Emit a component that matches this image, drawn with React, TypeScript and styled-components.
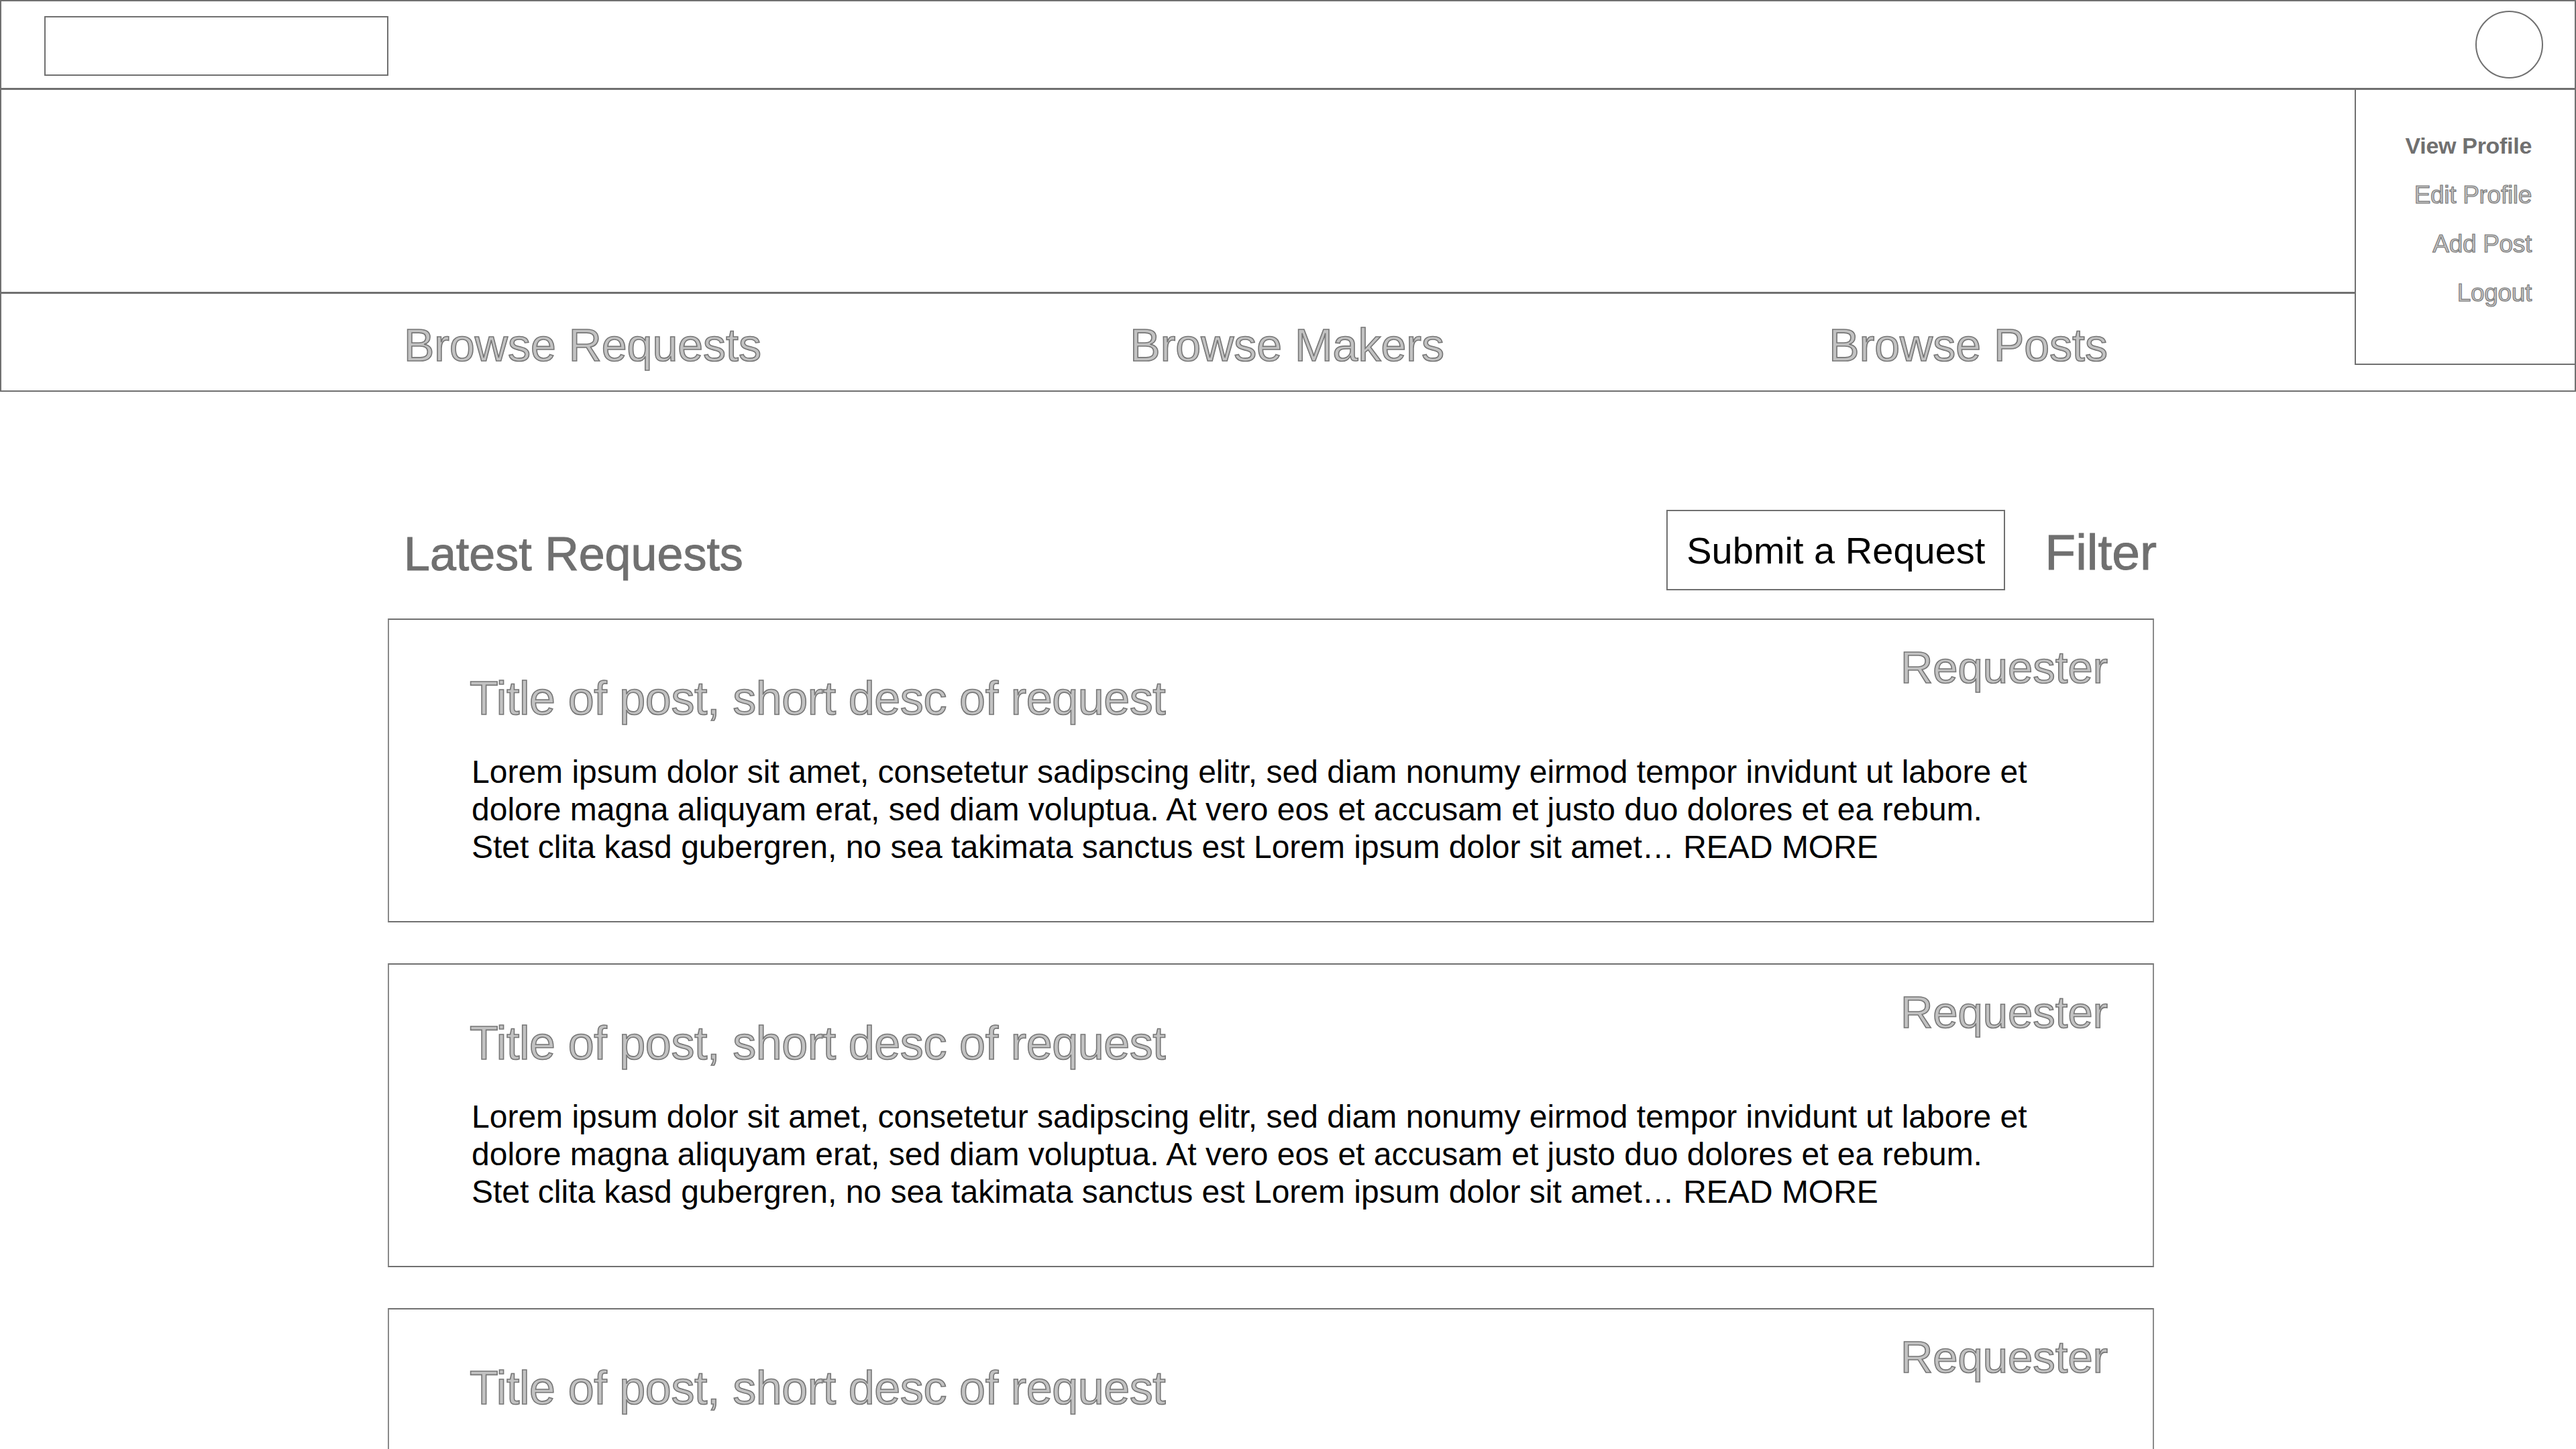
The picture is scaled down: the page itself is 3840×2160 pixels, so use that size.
import React from "react";
import styled, { createGlobalStyle, css } from "styled-components";

const GlobalStyle = createGlobalStyle`
  html, body {
    margin: 0;
    padding: 0;
    background: #ffffff;
  }
  body {
    font-family: "Liberation Sans", Arial, Helvetica, sans-serif;
    color: #000000;
  }
`;

const line = "#707070";

const outlined = css`
  color: #c2c2c2;
  -webkit-text-stroke: 1.6px #767676;
`;

const Page = styled.div`
  position: relative;
  width: 3840px;
  min-height: 2160px;
  overflow: hidden;
`;

const TopBar = styled.header`
  box-sizing: border-box;
  height: 134px;
  display: flex;
  align-items: center;
  justify-content: space-between;
  padding: 0 47px 0 64px;
  border: 2px solid ${line};
  border-bottom-width: 3px;
`;

const LogoBox = styled.div`
  box-sizing: border-box;
  width: 513px;
  height: 89px;
  margin-top: 3px;
  border: 2px solid ${line};
`;

const Avatar = styled.div`
  box-sizing: border-box;
  width: 101px;
  height: 101px;
  border-radius: 50%;
  border: 2px solid ${line};
`;

const Hero = styled.section`
  box-sizing: border-box;
  height: 304px;
  border-left: 2px solid ${line};
  border-right: 2px solid ${line};
  border-bottom: 3px solid ${line};
`;

const NavRow = styled.nav`
  box-sizing: border-box;
  height: 146px;
  border-left: 2px solid ${line};
  border-right: 2px solid ${line};
  border-bottom: 2px solid ${line};
`;

const NavInner = styled.div`
  width: 2633px;
  height: 100%;
  margin-left: 576px;
  box-sizing: border-box;
  padding: 8px 69px 0 24px;
  display: flex;
  align-items: center;
  justify-content: space-between;
`;

const NavLink = styled.a<{ $nudge?: number }>`
  font-size: 68px;
  margin-right: ${(p) => p.$nudge ?? 0}px;
  ${outlined}
`;

const Dropdown = styled.div`
  position: absolute;
  top: 132px;
  right: 0;
  box-sizing: border-box;
  width: 330px;
  height: 412px;
  background: #ffffff;
  border: 2px solid ${line};
  padding: 47px 64px 0 0;
  display: flex;
  flex-direction: column;
  align-items: flex-end;
`;

const MenuItem = styled.div<{ $active?: boolean }>`
  font-size: 37px;
  line-height: 73px;
  letter-spacing: -0.3px;
  ${(p) =>
    p.$active
      ? css`
          color: ${line};
          font-weight: 700;
          font-size: 34px;
        `
      : outlined}
  -webkit-text-stroke-width: ${(p) => (p.$active ? "0" : "1.1px")};
`;

const Main = styled.main`
  width: 2633px;
  margin: 176px 0 0 578px;
`;

const ListHeader = styled.div`
  display: flex;
  align-items: center;
  height: 120px;
  margin-bottom: 42px;
`;

const SectionTitle = styled.h2`
  margin: 12px 0 0 24px;
  font-size: 70px;
  font-weight: 400;
  color: ${line};
  -webkit-text-stroke: 1px ${line};
`;

const SubmitButton = styled.button`
  box-sizing: border-box;
  margin-left: auto;
  width: 505px;
  height: 120px;
  background: #ffffff;
  border: 2px solid ${line};
  font-family: "Liberation Sans", Arial, sans-serif;
  font-size: 56px;
  color: #000000;
  padding: 0;
  cursor: pointer;
`;

const FilterLabel = styled.span`
  margin: 6px -4px 0 59px;
  font-size: 75px;
  color: ${line};
  -webkit-text-stroke: 1px ${line};
`;

const CardList = styled.div`
  display: flex;
  flex-direction: column;
  gap: 61px;
`;

const Card = styled.article`
  box-sizing: border-box;
  height: 453px;
  border: 2px solid ${line};
  border-left-color: #8a8a8a;
  border-right-color: #8a8a8a;
  padding: 33px 67px 0 120px;
`;

const CardHead = styled.div`
  display: flex;
  align-items: flex-start;
  justify-content: space-between;
`;

const CardTitle = styled.h3`
  margin: 45px 0 0 0;
  font-size: 70px;
  line-height: 78px;
  font-weight: 400;
  letter-spacing: -0.4px;
  ${outlined}
`;

const Requester = styled.span`
  font-size: 67px;
  line-height: 76px;
  ${outlined}
`;

const CardBody = styled.p`
  margin: 43px 0 0 3px;
  font-size: 48px;
  line-height: 56px;
  color: #000000;
`;

const posts = [1, 2, 3];

export default function App() {
  return (
    <Page>
      <GlobalStyle />
      <TopBar>
        <LogoBox />
        <Avatar />
      </TopBar>
      <Hero />
      <NavRow>
        <NavInner>
          <NavLink>Browse Requests</NavLink>
          <NavLink $nudge={24}>Browse Makers</NavLink>
          <NavLink>Browse Posts</NavLink>
        </NavInner>
      </NavRow>
      <Dropdown>
        <MenuItem $active>View Profile</MenuItem>
        <MenuItem>Edit Profile</MenuItem>
        <MenuItem>Add Post</MenuItem>
        <MenuItem>Logout</MenuItem>
      </Dropdown>
      <Main>
        <ListHeader>
          <SectionTitle>Latest Requests</SectionTitle>
          <SubmitButton>Submit a Request</SubmitButton>
          <FilterLabel>Filter</FilterLabel>
        </ListHeader>
        <CardList>
          {posts.map((id) => (
            <Card key={id}>
              <CardHead>
                <CardTitle>Title of post, short desc of request</CardTitle>
                <Requester>Requester</Requester>
              </CardHead>
              <CardBody>
                Lorem ipsum dolor sit amet, consetetur sadipscing elitr, sed diam nonumy eirmod tempor invidunt ut labore et
                <br />
                dolore magna aliquyam erat, sed diam voluptua. At vero eos et accusam et justo duo dolores et ea rebum.
                <br />
                Stet clita kasd gubergren, no sea takimata sanctus est Lorem ipsum dolor sit amet… READ MORE
              </CardBody>
            </Card>
          ))}
        </CardList>
      </Main>
    </Page>
  );
}
